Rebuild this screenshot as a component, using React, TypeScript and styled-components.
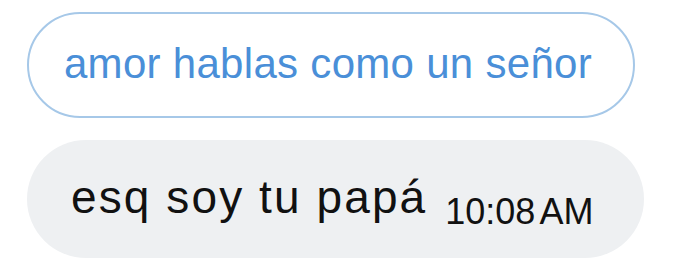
import React from "react";
import styled, { createGlobalStyle } from "styled-components";

const Global = createGlobalStyle`
  html, body { margin: 0; padding: 0; background: #ffffff; }
  body { font-family: "Liberation Sans", Arial, sans-serif; }
`;

const Thread = styled.div`
  display: flex;
  flex-direction: column;
  align-items: flex-start;
  gap: 22px;
  padding: 12px 0 0 27px;
`;

const ReplyPill = styled.div`
  box-sizing: border-box;
  width: 608px;
  height: 106px;
  border: 2px solid #a6c8e8;
  border-radius: 53px;
  display: flex;
  align-items: center;
  justify-content: center;
  color: #4a8fd8;
  font-size: 42px;
  letter-spacing: 0.3px;
  line-height: 1;
  padding: 0 6px 2px 0;
`;

const Bubble = styled.div`
  box-sizing: border-box;
  width: 617px;
  height: 118px;
  border-radius: 59px;
  background: #eef0f2;
  display: flex;
  align-items: center;
  padding: 5px 0 0 44px;
  color: #111111;
`;

const Line = styled.div`
  font-size: 46px;
  line-height: 1;
  letter-spacing: 2.1px;
  white-space: nowrap;
`;

const Time = styled.span`
  font-size: 36px;
  letter-spacing: 0px;
  word-spacing: -4px;
  margin-left: 18px;
  vertical-align: -11px;
`;

export default function App() {
  return (
    <>
      <Global />
      <Thread>
        <ReplyPill>amor hablas como un señor</ReplyPill>
        <Bubble>
          <Line>
            esq soy tu papá
            <Time>10:08 AM</Time>
          </Line>
        </Bubble>
      </Thread>
    </>
  );
}
